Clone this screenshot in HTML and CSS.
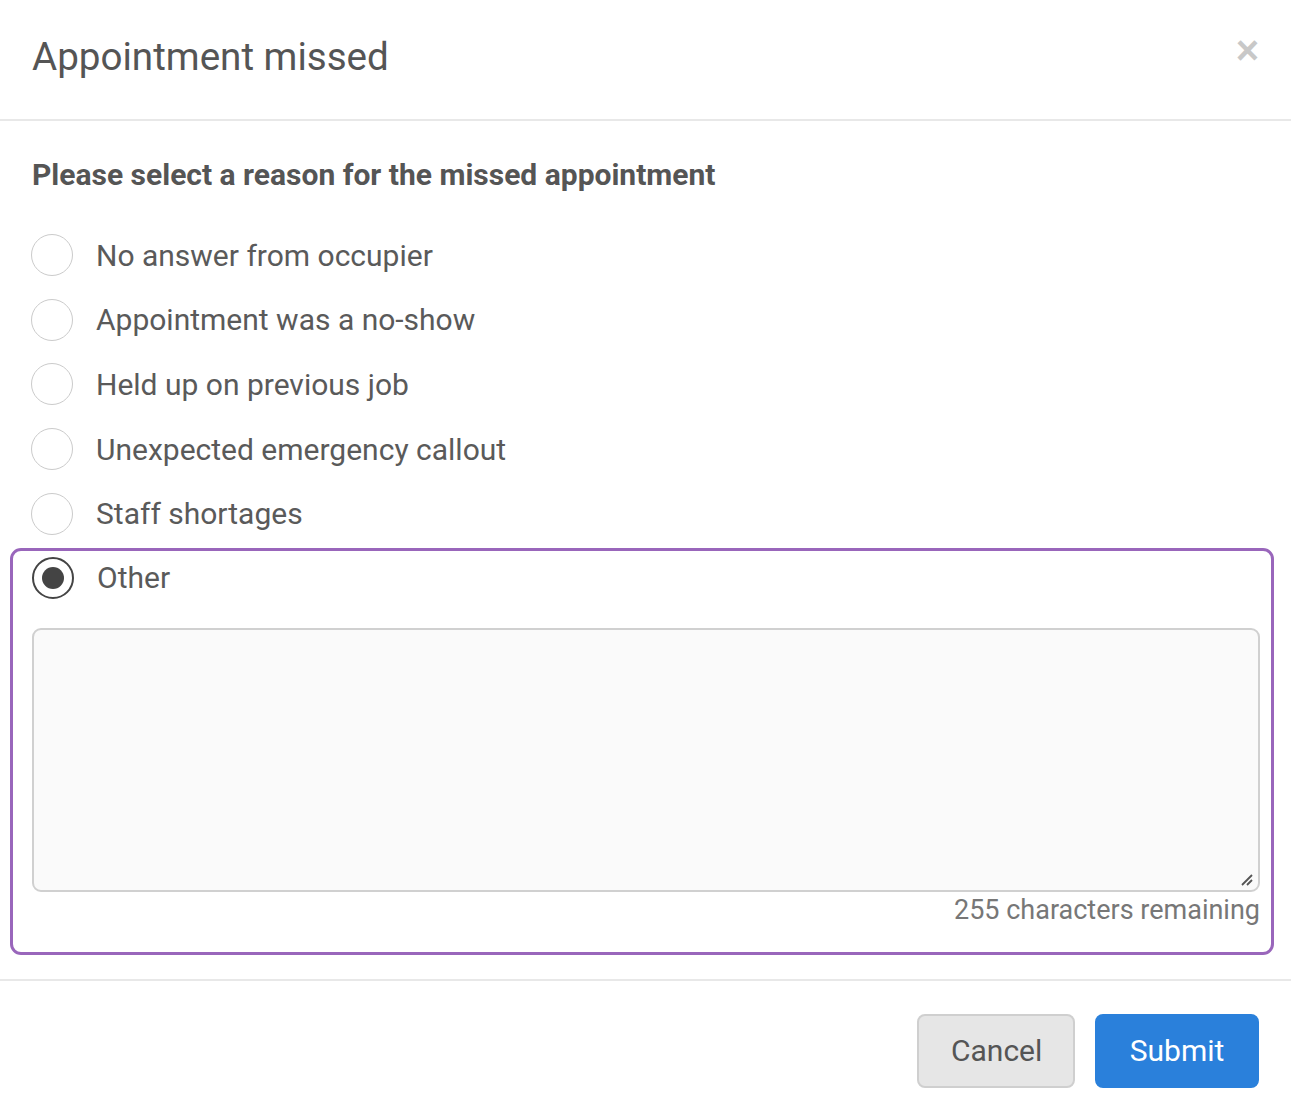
FILE: index.html
```html
<!DOCTYPE html>
<html>
<head>
<meta charset="utf-8">
<link rel="stylesheet" href="styles.css">
</head>
<body>
<div class="modal">
  <div class="modal-header">
    <h1 class="modal-title">Appointment missed</h1>
    <button class="close" type="button">&times;</button>
  </div>
  <div class="modal-body">
    <h2 class="prompt">Please select a reason for the missed appointment</h2>
    <div class="options">
      <label class="option"><span class="radio"></span><span class="label">No answer from occupier</span></label>
      <label class="option"><span class="radio"></span><span class="label">Appointment was a no-show</span></label>
      <label class="option"><span class="radio"></span><span class="label">Held up on previous job</span></label>
      <label class="option"><span class="radio"></span><span class="label">Unexpected emergency callout</span></label>
      <label class="option"><span class="radio"></span><span class="label">Staff shortages</span></label>
    </div>
    <div class="other-box">
      <label class="option other"><span class="radio checked"></span><span class="label">Other</span></label>
      <div class="textarea">
        <svg class="grip" width="16" height="16" viewBox="0 0 16 16"><path d="M14 4 L4 14 M14 9 L9 14" stroke="#555" stroke-width="1.8" fill="none"/></svg>
      </div>
      <div class="remaining">255 characters remaining</div>
    </div>
  </div>
  <div class="modal-footer">
    <button class="btn btn-default" type="button">Cancel</button>
    <button class="btn btn-primary" type="button">Submit</button>
  </div>
</div>
</body>
</html>
```

FILE: styles.css
```css
html, body {
  margin: 0;
  padding: 0;
  background: #fff;
}
body {
  font-family: Roboto, "Liberation Sans", sans-serif;
  color: #555;
}
.modal {
  width: 1291px;
}
.modal-header {
  height: 121px;
  border-bottom: 2px solid #e8e8e8;
  display: flex;
  align-items: flex-start;
  justify-content: space-between;
  padding: 0 32px 0 32px;
  box-sizing: border-box;
}
.modal-title {
  margin: 32px 0 0 0;
  font-size: 38.6px;
  font-weight: 400;
  line-height: 50px;
  color: #555;
}
.close {
  margin-top: 30px;
  margin-right: 0;
  border: 0;
  background: none;
  padding: 0;
  font-family: "Liberation Sans", sans-serif;
  font-size: 40px;
  font-weight: 700;
  line-height: 40px;
  color: #c8c8c8;
}
.modal-body {
  padding: 34px 17px 24px 10px;
}
.prompt {
  margin: 0 0 28px 22px;
  font-size: 30px;
  font-weight: 700;
  line-height: 40px;
  color: #555;
}
.options {
  display: flex;
  flex-direction: column;
  padding-left: 21px;
}
.option {
  display: flex;
  align-items: center;
  height: 64.6px;
  gap: 23px;
}
.radio {
  width: 42px;
  height: 42px;
  border: 1.5px solid #cbcbcb;
  border-radius: 50%;
  box-sizing: border-box;
  flex: none;
  position: relative;
  background: #fff;
}
.radio.checked {
  border: 2px solid #444;
}
.radio.checked::after {
  content: "";
  position: absolute;
  left: 8px;
  top: 8px;
  width: 22px;
  height: 22px;
  border-radius: 50%;
  background: #444;
}
.label {
  font-size: 30px;
  color: #5a5a5a;
}
.other-box {
  border: 3px solid #9966bb;
  border-radius: 11px;
  padding: 0 11px 0 19px;
  height: 407px;
  box-sizing: border-box;
  margin-top: 2px;
}
.option.other {
  height: 54px;
  margin-top: 0;
}
.textarea {
  margin-top: 23px;
  height: 264px;
  border: 2px solid #d0d0d0;
  border-radius: 9px;
  background: #fafafa;
  box-sizing: border-box;
  position: relative;
}
.grip {
  position: absolute;
  right: 4px;
  bottom: 3px;
}
.remaining {
  text-align: right;
  font-size: 27px;
  color: #777;
  line-height: 36px;
}
.modal-footer {
  border-top: 2px solid #e8e8e8;
  display: flex;
  justify-content: flex-end;
  gap: 20px;
  padding: 33px 32px 0 0;
}
.btn {
  font-family: Roboto, "Liberation Sans", sans-serif;
  font-size: 30px;
  height: 74px;
  border-radius: 8px;
  padding: 0 32px;
  box-sizing: border-box;
}
.btn-default {
  width: 158px;
  background: #e6e6e6;
  border: 2px solid #cfcfcf;
  color: #555;
}
.btn-primary {
  width: 164px;
  background: #2a80db;
  border: 2px solid #2a80db;
  color: #fff;
}
```
